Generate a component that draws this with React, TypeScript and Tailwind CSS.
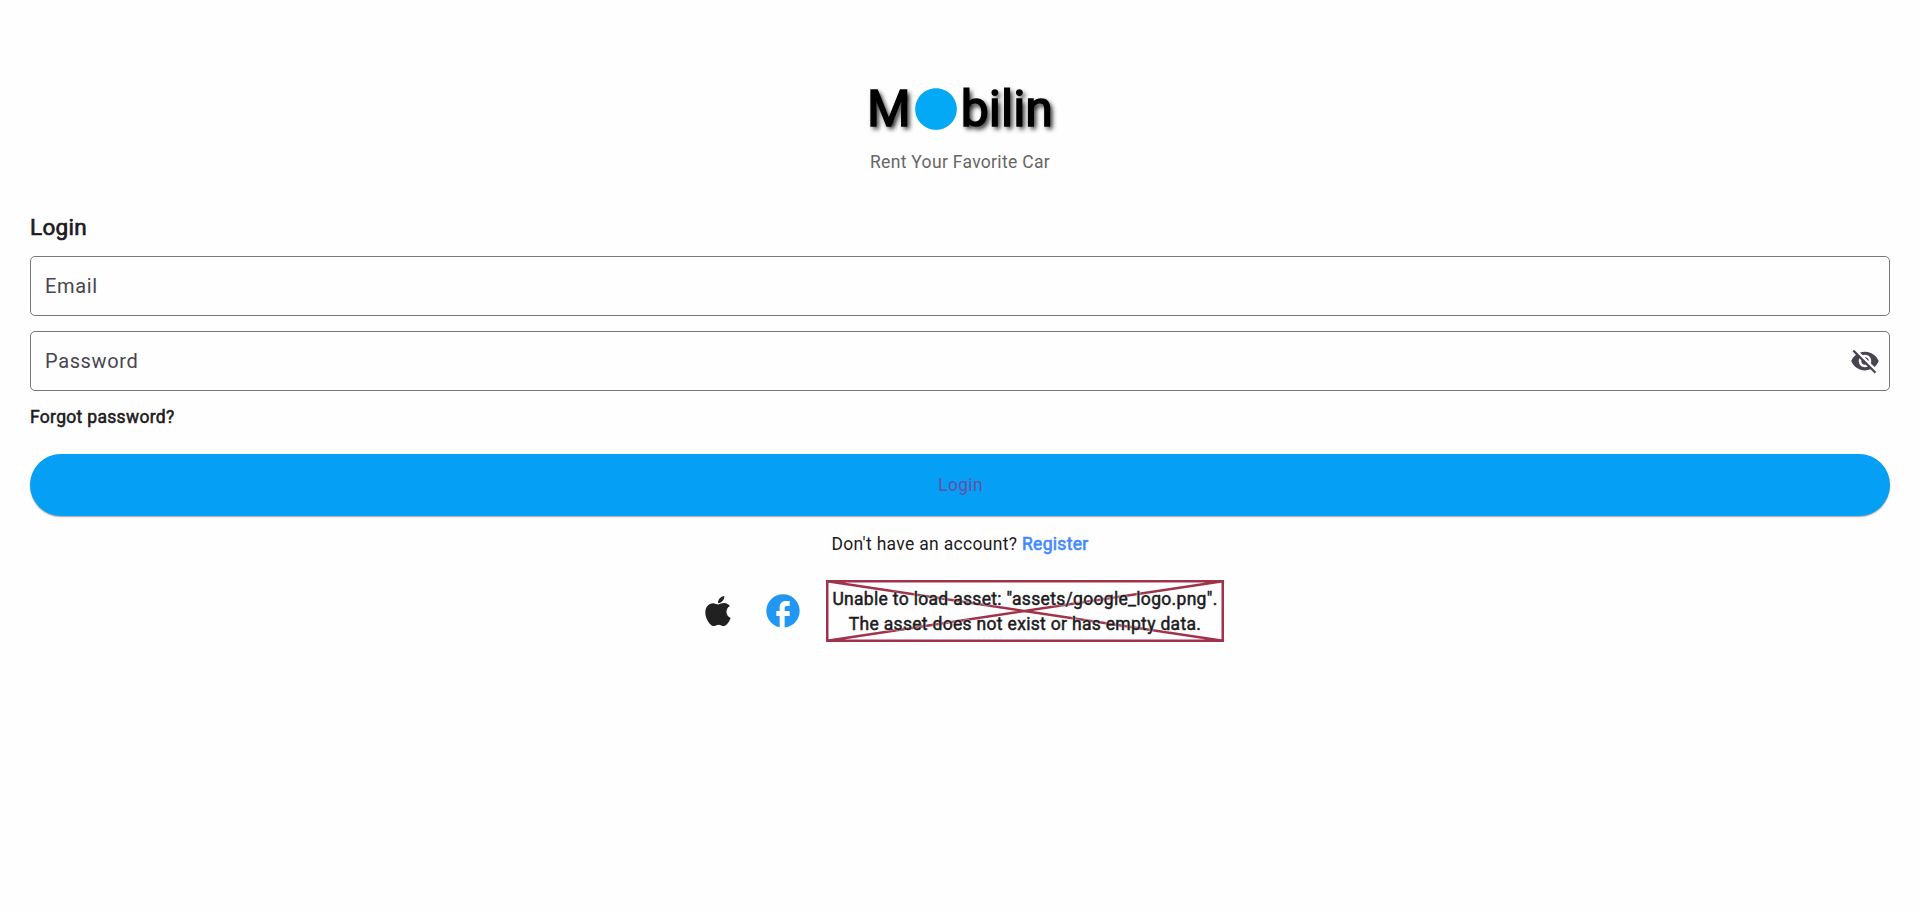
import { useState } from "react";
import { MdCircle, MdFacebook, MdVisibilityOff } from "react-icons/md";

function AppleIcon({ className }: { className?: string }) {
  return (
    <svg className={className} viewBox="0 0 24 24" fill="currentColor">
      <path d="M17.05 20.28c-.98.95-2.05.8-3.08.35-1.09-.46-2.09-.48-3.24 0-1.44.62-2.2.44-3.06-.35C2.79 15.25 3.51 7.59 9.05 7.31c1.35.07 2.29.74 3.08.8 1.18-.24 2.31-.93 3.57-.84 1.51.12 2.65.72 3.4 1.8-3.12 1.87-2.38 5.98.48 7.13-.57 1.5-1.31 2.99-2.54 4.09zM12.03 7.25c-.15-2.23 1.66-4.07 3.74-4.25.29 2.58-2.34 4.5-3.74 4.25z" />
    </svg>
  );
}

function Logo() {
  return (
    <div className="flex h-[73px] items-center justify-center text-[50px] leading-[73px] tracking-normal text-black [-webkit-text-stroke:1.56px_black] [text-shadow:2.5px_2.5px_5px_black]">
      <span className="pt-[2px]">M</span>
      <MdCircle className="size-[50px] text-[#03a9f4] [stroke-width:0]" />
      <span className="pt-[2px]">bilin</span>
    </div>
  );
}

function Field({ label, type, children }: { label: string; type: string; children?: React.ReactNode }) {
  const [value, setValue] = useState("");
  return (
    <div className="flex h-[60px] items-center rounded-[5px] border border-[#79747e] pr-[9px] pl-[14px]">
      <input
        className="w-full flex-1 bg-transparent text-[20px] leading-[30px] tracking-[0.625px] text-[#49454f] outline-none placeholder:text-[#49454f] placeholder:opacity-100"
        type={type}
        placeholder={label}
        value={value}
        onChange={(e) => setValue(e.target.value)}
      />
      {children}
    </div>
  );
}

function MissingAsset() {
  return (
    <div className="relative flex h-[62px] w-[398px] items-center justify-center pt-[2px] text-center text-[17.5px] leading-[25px] tracking-[0.3125px] text-[#1d1b20]">
      <svg className="absolute inset-0 size-full" viewBox="0 0 398 62" fill="none" stroke="#a0324a" strokeWidth="2.5">
        <path d="M1.25 1.25H396.75V60.75H1.25ZM1.25 1.25L396.75 60.75M396.75 1.25L1.25 60.75" />
      </svg>
      <p className="relative whitespace-nowrap [-webkit-text-stroke:0.5px_#1d1b20] [text-shadow:0_0_2px_white,0_0_2px_white]">
        Unable to load asset: "assets/google_logo.png".
        <br />
        The asset does not exist or has empty data.
      </p>
    </div>
  );
}

export default function App() {
  return (
    <main className="flex min-h-screen flex-col bg-[#fffeff] px-[30px] pt-[72px] font-[Roboto,sans-serif] text-[17.5px] leading-[25px] tracking-[0.3125px] text-[#1d1b20]">
      <Logo />
      <p className="mt-[5px] text-center text-[#666666]">Rent Your Favorite Car</p>
      <h1 className="mt-[36px] text-[22.5px] leading-[32px] [-webkit-text-stroke:0.7px_#1d1b20]">Login</h1>
      <div className="mt-[13px] flex flex-col gap-[15px]">
        <Field label="Email" type="text" />
        <Field label="Password" type="password">
          <MdVisibilityOff className="size-[30px] text-[#49454f]" />
        </Field>
      </div>
      <a className="mt-[14px] self-start [-webkit-text-stroke:0.55px_#1d1b20]">Forgot password?</a>
      <button className="mt-[24px] h-[62px] rounded-full bg-[#059ff5] pl-px text-[#6750a4] shadow-[0_1px_1.5px_rgba(0,0,0,0.35)]">
        Login
      </button>
      <p className="mt-[16px] text-center">
        Don't have an account? <a className="text-[#448aff] [-webkit-text-stroke:0.65px_#448aff]">Register</a>
      </p>
      <div className="mt-[23px] flex items-center pl-[667.5px]">
        <AppleIcon className="size-[40px] text-[#212121]" />
        <MdFacebook className="ml-[25px] size-[40px] text-[#2196f3]" />
        <div className="ml-[23.5px]">
          <MissingAsset />
        </div>
      </div>
    </main>
  );
}
